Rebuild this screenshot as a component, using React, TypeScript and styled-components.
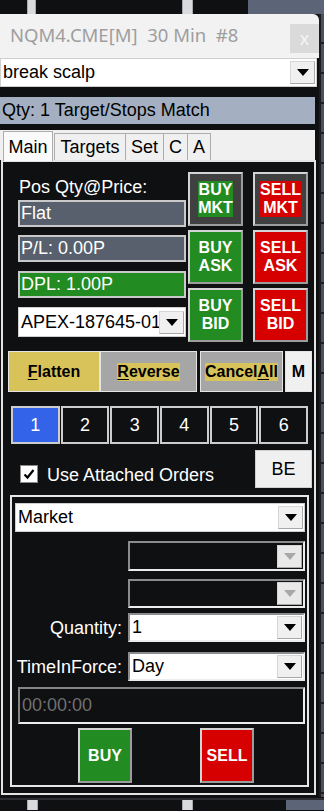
import React from 'react';
import styled, { createGlobalStyle } from 'styled-components';

const GlobalStyle = createGlobalStyle`
  html, body { margin: 0; padding: 0; background: #0f1012; }
  body { font-family: "Liberation Sans", Arial, sans-serif; }
  * { box-sizing: border-box; }
`;

const DARK = '#0f1012';
const GREEN = '#228b22';
const RED = '#d70000';
const GOLD = '#d8c35a';

const Page = styled.div`
  width: 324px;
  height: 811px;
  display: grid;
  grid-template-columns: 319px 5px;
  grid-template-rows: 14px 783px 14px;
  background: ${DARK};
  overflow: hidden;
`;

const ChartStrip = styled.div`
  grid-column: 1 / 3;
  display: flex;
  flex-direction: column;
`;

const StripRow = styled.div<{ $h: number }>`
  display: flex;
  height: ${(p) => p.$h}px;
`;

const StripLine = styled.div`
  height: 2px;
  margin-top: 1px;
  background: #2c2d30;
`;

const Gap = styled.div<{ $w: number }>`
  width: ${(p) => p.$w}px;
  flex: none;
`;

const GridBar = styled.div<{ $w: number }>`
  width: ${(p) => p.$w}px;
  flex: none;
  background: #d9dadd;
  border-left: 1px solid #a9aab0;
  border-right: 1px solid #a9aab0;
`;

const Slate = styled.div`
  flex: 1;
  background: #5b6577;
`;

const SideStrip = styled.div`
  border-left: 2px solid #1c1d20;
  background: repeating-linear-gradient(
    to bottom,
    #4b515c 0px,
    #4b515c 28px,
    #1d1f23 28px,
    #1d1f23 30px
  );
`;

const Window = styled.div`
  display: flex;
  flex-direction: column;
  background: ${DARK};
  height: 783px;
`;

const TitleBar = styled.div`
  height: 44px;
  flex: none;
  background: #f2f2f2;
  border-top-right-radius: 6px;
  display: flex;
  align-items: flex-start;
`;

const Title = styled.div`
  flex: 1;
  font-family: "Noto Sans", "Open Sans", sans-serif;
  font-size: 18.5px;
  line-height: 22px;
  margin-top: 10px;
  padding-left: 10px;
  color: #9e9e9e;
  white-space: pre;
`;

const CloseButton = styled.div`
  width: 29px;
  height: 29px;
  margin-top: 10px;
  background: #dadada;
  color: #f4f4f4;
  font-family: "Noto Sans", sans-serif;
  font-size: 18px;
  display: flex;
  align-items: center;
  justify-content: center;
  padding-bottom: 2px;
`;

const ComboBox = styled.div<{ $w: number; $h: number; $disabled?: boolean; $sunken?: boolean }>`
  width: ${(p) => p.$w}px;
  height: ${(p) => p.$h}px;
  flex: none;
  display: flex;
  align-items: center;
  background: ${(p) => (p.$disabled ? DARK : '#ffffff')};
  border: 1px solid #cfcfcf;
  ${(p) =>
    p.$sunken
      ? `border-width: 2px; border-color: #8c8c8c #ececec #ececec #8c8c8c;`
      : ''}
  color: #000;
  font-size: 18px;
`;

const ComboText = styled.div`
  flex: 1;
  padding-left: 2px;
  white-space: nowrap;
  overflow: hidden;
`;

const ArrowButton = styled.div<{ $disabled?: boolean }>`
  width: 25px;
  height: 23px;
  flex: none;
  margin-right: 1px;
  background: ${(p) => (p.$disabled ? '#e9e9e9' : '#f0f0f0')};
  border: 1px solid #d6d6d6;
  border-right-color: #a8a8a8;
  border-bottom-color: #a8a8a8;
  display: flex;
  align-items: center;
  justify-content: center;
`;

const Triangle = styled.div<{ $disabled?: boolean }>`
  width: 0;
  height: 0;
  border-left: 6.5px solid transparent;
  border-right: 6.5px solid transparent;
  border-top: 7px solid ${(p) => (p.$disabled ? '#a8a8a8' : '#000')};
`;

const QtyBar = styled.div`
  margin-top: 10px;
  width: 315px;
  height: 27px;
  flex: none;
  background: #a4b0c1;
  color: #000;
  font-size: 18px;
  line-height: 27px;
  padding-left: 2px;
  white-space: nowrap;
`;

const TabHeader = styled.div`
  margin-top: 6px;
  width: 315px;
  height: 30px;
  flex: none;
  background: #f0f0f0;
  display: flex;
  align-items: flex-end;
  padding-left: 3px;
  position: relative;
  z-index: 1;
`;

const Tab = styled.div<{ $w: number; $active?: boolean }>`
  width: ${(p) => p.$w}px;
  height: ${(p) => (p.$active ? 30 : 27)}px;
  margin-bottom: ${(p) => (p.$active ? -1 : 0)}px;
  margin-right: ${(p) => (p.$active ? 2 : 0)}px;
  background: ${(p) => (p.$active ? '#fafafa' : '#f0f0f0')};
  border: 1px solid #adadad;
  border-bottom: none;
  margin-left: ${(p) => (p.$active ? 0 : -1)}px;
  font-size: 18px;
  color: #000;
  display: flex;
  align-items: center;
  justify-content: center;
  padding-top: 1px;
`;

const Panel = styled.div`
  margin-left: 1px;
  width: 315px;
  height: 635px;
  flex: none;
  border: 2px solid #e4e4e4;
  background: ${DARK};
  display: flex;
  flex-direction: column;
`;

const TopSection = styled.div`
  display: flex;
  padding: 10px 0 0 15px;
  height: 180px;
  flex: none;
`;

const LeftCol = styled.div`
  width: 168px;
  display: flex;
  flex-direction: column;
`;

const WhiteLabel = styled.div`
  color: #ffffff;
  font-size: 18px;
  line-height: 20px;
  white-space: nowrap;
`;

const PosLabel = styled(WhiteLabel)`
  margin-top: 5px;
  padding-left: 1px;
`;

const InfoField = styled.div<{ $bg: string; $mt: number }>`
  margin-top: ${(p) => p.$mt}px;
  height: 27px;
  background: ${(p) => p.$bg};
  border: 2px solid #c9c9c9;
  color: #ffffff;
  font-size: 18px;
  line-height: 23px;
  padding-left: 1px;
  white-space: nowrap;
`;

const ButtonGrid = styled.div`
  margin-left: 2px;
  display: grid;
  grid-template-columns: 55px 55px;
  grid-auto-rows: 54px;
  column-gap: 10px;
  row-gap: 4px;
`;

const TradeButton = styled.div<{ $bg: string }>`
  background: ${(p) => p.$bg};
  border: 2px solid;
  border-color: #d4d4d4 #9c9c9c #9c9c9c #d4d4d4;
  color: #ffffff;
  font-weight: 700;
  font-size: 16px;
  line-height: 18px;
  display: flex;
  align-items: center;
  justify-content: center;
  text-align: center;
`;

const TextHighlight = styled.span<{ $bg: string }>`
  display: inline-block;
  background: ${(p) => p.$bg};
`;

const ActionBar = styled.div`
  display: flex;
  margin: 9px 0 0 5px;
  height: 41px;
  flex: none;
`;

const ActionButton = styled.div<{ $w: number; $bg: string; $ml?: number }>`
  width: ${(p) => p.$w}px;
  margin-left: ${(p) => p.$ml || 0}px;
  background: ${(p) => p.$bg};
  border: 1px solid #e4e4e4;
  color: #000;
  font-weight: 700;
  font-size: 16px;
  display: flex;
  align-items: center;
  justify-content: center;
  white-space: nowrap;
  u { text-decoration-thickness: 1px; text-underline-offset: 2px; }
`;

const NumberRow = styled.div`
  display: grid;
  grid-template-columns: repeat(6, 1fr);
  margin: 14px 0 0 8px;
  width: 298px;
  height: 38px;
  flex: none;
`;

const NumberTab = styled.div<{ $active?: boolean }>`
  background: ${(p) => (p.$active ? '#3263e9' : DARK)};
  border: 2px solid #cdcdcd;
  margin-right: 1px;
  color: #ffffff;
  font-size: 18px;
  display: flex;
  align-items: center;
  justify-content: center;
`;

const CheckRow = styled.div`
  display: flex;
  align-items: flex-start;
  margin-top: 6px;
  padding-left: 17px;
  height: 38px;
  flex: none;
`;

const CheckBox = styled.div`
  width: 18px;
  height: 18px;
  margin-top: 15px;
  background: #ffffff;
  border: 1px solid #8a8a8a;
  display: flex;
  align-items: center;
  justify-content: center;
`;

const CheckLabel = styled(WhiteLabel)`
  margin: 15px 0 0 9px;
`;

const BEButton = styled.div`
  margin-left: auto;
  margin-right: 2px;
  width: 57px;
  height: 38px;
  background: #f0f0f0;
  border: 1px solid #d0d0d0;
  color: #000;
  font-size: 18px;
  display: flex;
  align-items: center;
  justify-content: center;
`;

const OrderBox = styled.div`
  margin: 7px 0 0 7px;
  width: 299px;
  height: 292px;
  flex: none;
  border: 2px solid #e6e6e6;
  padding: 6px 0 0 3px;
  display: flex;
  flex-direction: column;
`;

const FieldRow = styled.div<{ $mt: number }>`
  display: flex;
  align-items: center;
  margin-top: ${(p) => p.$mt}px;
`;

const RowLabel = styled(WhiteLabel)`
  width: 113px;
  text-align: right;
  padding-right: 6px;
`;

const TimeField = styled.div`
  margin: 6px 0 0 3px;
  width: 287px;
  height: 37px;
  flex: none;
  border: 2px solid;
  border-color: #858585 #ececec #ececec #858585;
  color: #6f6f6f;
  font-size: 18px;
  line-height: 33px;
  padding-left: 2px;
`;

const SubmitRow = styled.div`
  display: flex;
  margin-top: 4px;
  height: 55px;
  flex: none;
`;

const SubmitButton = styled(TradeButton)<{ $ml: number }>`
  width: 54px;
  margin-left: ${(p) => p.$ml}px;
`;

type ComboProps = { w: number; h: number; text?: string; disabled?: boolean; sunken?: boolean };

const Combo: React.FC<ComboProps> = ({ w, h, text, disabled, sunken }) => (
  <ComboBox $w={w} $h={h} $disabled={disabled} $sunken={sunken}>
    <ComboText>{text}</ComboText>
    <ArrowButton $disabled={disabled}>
      <Triangle $disabled={disabled} />
    </ArrowButton>
  </ComboBox>
);

const tabs = [
  { label: 'Main', w: 50, active: true },
  { label: 'Targets', w: 72 },
  { label: 'Set', w: 39 },
  { label: 'C', w: 25 },
  { label: 'A', w: 24 },
];

export default function App() {
  return (
    <>
      <GlobalStyle />
      <Page>
        <ChartStrip>
          <StripRow $h={14}>
            <Gap $w={27} />
            <GridBar $w={9} />
            <Gap $w={146} />
            <GridBar $w={11} />
            <Gap $w={55} />
            <Slate />
          </StripRow>
        </ChartStrip>

        <Window>
          <TitleBar>
            <Title>{'NQM4.CME[M]  30 Min  #8'}</Title>
            <CloseButton>x</CloseButton>
          </TitleBar>

          <Combo w={317} h={29} text="break scalp" />

          <QtyBar>Qty: 1 Target/Stops Match</QtyBar>

          <TabHeader>
            {tabs.map((t) => (
              <Tab key={t.label} $w={t.w} $active={t.active}>
                {t.label}
              </Tab>
            ))}
          </TabHeader>

          <Panel>
            <TopSection>
              <LeftCol>
                <PosLabel>Pos Qty@Price:</PosLabel>
                <InfoField $bg="#58606d" $mt={3}>Flat</InfoField>
                <InfoField $bg="#58606d" $mt={8}>P/L: 0.00P</InfoField>
                <InfoField $bg={GREEN} $mt={9}>DPL: 1.00P</InfoField>
                <FieldRow $mt={9}>
                  <Combo w={168} h={30} text="APEX-187645-01" />
                </FieldRow>
              </LeftCol>
              <ButtonGrid>
                <TradeButton $bg="#404040">
                  <TextHighlight $bg={GREEN}>BUY<br />MKT</TextHighlight>
                </TradeButton>
                <TradeButton $bg="#404040">
                  <TextHighlight $bg={RED}>SELL<br />MKT</TextHighlight>
                </TradeButton>
                <TradeButton $bg={GREEN}>BUY<br />ASK</TradeButton>
                <TradeButton $bg={RED}>SELL<br />ASK</TradeButton>
                <TradeButton $bg={GREEN}>BUY<br />BID</TradeButton>
                <TradeButton $bg={RED}>SELL<br />BID</TradeButton>
              </ButtonGrid>
            </TopSection>

            <ActionBar>
              <ActionButton $w={92} $bg={GOLD}>
                <span><u>F</u>latten</span>
              </ActionButton>
              <ActionButton $w={97} $bg="#a6a6a6">
                <TextHighlight $bg={GOLD}><u>R</u>everse</TextHighlight>
              </ActionButton>
              <ActionButton $w={83} $bg="#a6a6a6" $ml={3}>
                <TextHighlight $bg={GOLD}>Cancel<u>A</u>ll</TextHighlight>
              </ActionButton>
              <ActionButton $w={27} $bg="#f0f0f0" $ml={2}>M</ActionButton>
            </ActionBar>

            <NumberRow>
              {[1, 2, 3, 4, 5, 6].map((n) => (
                <NumberTab key={n} $active={n === 1}>{n}</NumberTab>
              ))}
            </NumberRow>

            <CheckRow>
              <CheckBox>
                <svg width="12" height="12" viewBox="0 0 12 12">
                  <path d="M1.5 6.5 L4.5 9.5 L10.5 2" fill="none" stroke="#000" strokeWidth="2.2" />
                </svg>
              </CheckBox>
              <CheckLabel>Use Attached Orders</CheckLabel>
              <BEButton>BE</BEButton>
            </CheckRow>

            <OrderBox>
              <Combo w={290} h={29} text="Market" />
              <FieldRow $mt={9}>
                <RowLabel />
                <Combo w={177} h={30} disabled sunken />
              </FieldRow>
              <FieldRow $mt={8}>
                <RowLabel />
                <Combo w={177} h={29} disabled sunken />
              </FieldRow>
              <FieldRow $mt={5}>
                <RowLabel>Quantity:</RowLabel>
                <Combo w={177} h={29} text="1" sunken />
              </FieldRow>
              <FieldRow $mt={10}>
                <RowLabel>TimeInForce:</RowLabel>
                <Combo w={177} h={29} text="Day" sunken />
              </FieldRow>
              <TimeField>00:00:00</TimeField>
              <SubmitRow>
                <SubmitButton $bg={GREEN} $ml={63}>BUY</SubmitButton>
                <SubmitButton $bg={RED} $ml={68}>SELL</SubmitButton>
              </SubmitRow>
            </OrderBox>
          </Panel>
        </Window>

        <SideStrip />

        <ChartStrip>
          <StripLine />
          <StripRow $h={10}>
            <Gap $w={27} />
            <GridBar $w={11} />
            <Gap $w={144} />
            <GridBar $w={11} />
            <Gap $w={93} />
            <Slate />
          </StripRow>
        </ChartStrip>
      </Page>
    </>
  );
}
